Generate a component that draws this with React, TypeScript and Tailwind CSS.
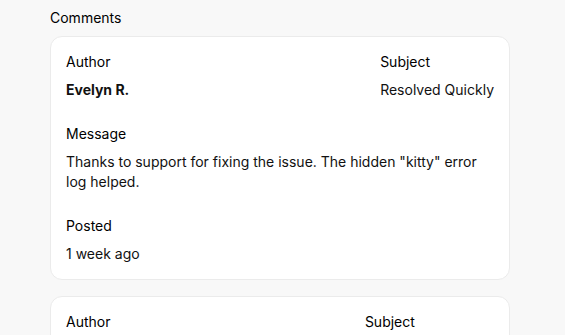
import React from 'react';

const comments = [
    {
        author: 'Evelyn R.',
        subject: 'Resolved Quickly',
        message: 'Thanks to support for fixing the issue. The hidden "kitty" error log helped.',
        posted: '1 week ago'
    },
    {
        author: 'Marcus T.',
        subject: 'Smooth Experience',
        message: 'The team walked me through every step and the fix worked right away.',
        posted: '2 weeks ago'
    }
];

const App: React.FC = () => {
    return (
        <div className="min-h-screen bg-[#f8f8f8] text-[#111111] font-['Inter',sans-serif] text-sm leading-5 pt-2 pb-8">
            <div className="ml-[50px] w-[460px]">
                <h2 className="mb-2 text-black">Comments</h2>
                <div className="flex flex-col gap-4">
                    {comments.map((c, idx) => (
                        <div key={idx} className="bg-white border border-[#ebebeb] rounded-xl p-[15px] flex flex-col gap-6">
                            <div className="flex justify-between">
                                <div className="flex flex-col gap-2">
                                    <span className="text-black">Author</span>
                                    <span className="font-bold">{c.author}</span>
                                </div>
                                <div className="flex flex-col gap-2">
                                    <span className="text-black">Subject</span>
                                    <span>{c.subject}</span>
                                </div>
                            </div>
                            <div className="flex flex-col gap-2">
                                <span className="text-black">Message</span>
                                <p>{c.message}</p>
                            </div>
                            <div className="flex flex-col gap-2">
                                <span className="text-black">Posted</span>
                                <span>{c.posted}</span>
                            </div>
                        </div>
                    ))}
                </div>
            </div>
        </div>
    );
};

export default App;
